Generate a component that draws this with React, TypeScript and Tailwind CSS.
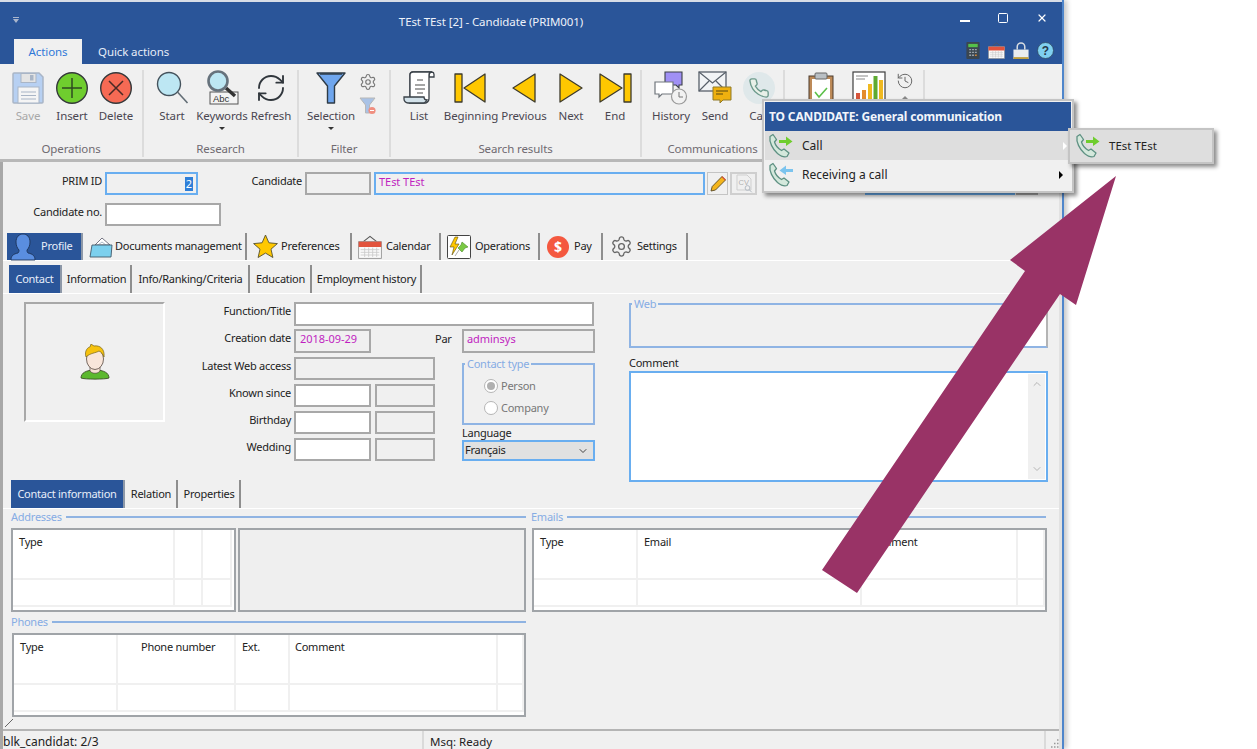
import React from "react";
import { RefreshCw, Settings, History as HistoryIcon, Square, X, ChevronDown, ChevronUp } from "lucide-react";

const PHONE = "M22 16.92v3a2 2 0 0 1-2.18 2 19.79 19.79 0 0 1-8.63-3.07 19.5 19.5 0 0 1-6-6 19.79 19.79 0 0 1-3.07-8.67A2 2 0 0 1 4.11 2h3a2 2 0 0 1 2 1.72 12.84 12.84 0 0 0 .7 2.81 2 2 0 0 1-.45 2.11L8.09 9.91a16 16 0 0 0 6 6l1.27-1.27a2 2 0 0 1 2.11-.45 12.84 12.84 0 0 0 2.81.7A2 2 0 0 1 22 16.92z";
const GREY_FIELD = "border-2 border-[#a8a8a8] bg-[#f0f0f0]";
const WHITE_FIELD = "border-2 border-[#a8a8a8] bg-white";
const BODY_TEXT = "text-[11px] tracking-[-0.25px]";
const VALUE_TEXT = "text-[11px] tracking-[-0.05px] text-[#c01fc0]";
const RIBBON_TEXT = "text-[11.5px] tracking-[-0.1px]";

function SaveIcon() {
  return (
    <svg width="34" height="34" viewBox="0 0 34 34">
      <path d="M3 2h25l4 4v25a1 1 0 0 1-1 1H3a1 1 0 0 1-1-1V3a1 1 0 0 1 1-1z" fill="#b7d0f2" stroke="#a9b5c6" strokeWidth="1.5" />
      <rect x="10" y="2.5" width="15" height="9" fill="#e4e4e4" stroke="#a9b5c6" />
      <rect x="19" y="4" width="3.5" height="5.5" fill="#a9b5c6" />
      <rect x="7" y="16" width="21" height="16" fill="#f5f5f5" stroke="#a9b5c6" />
      <path d="M10 21h15M10 24.5h15M10 28h15" stroke="#a9b5c6" />
    </svg>
  );
}
function InsertIcon() {
  return (
    <svg width="34" height="34" viewBox="0 0 34 34">
      <circle cx="17" cy="17" r="15.3" fill="#6fcd2e" stroke="#34383a" strokeWidth="1.4" />
      <path d="M17 7v20M7 17h20" stroke="#2f4a22" strokeWidth="1.5" />
    </svg>
  );
}
function DeleteIcon() {
  return (
    <svg width="34" height="34" viewBox="0 0 34 34">
      <circle cx="17" cy="17" r="15.3" fill="#f66a54" stroke="#34383a" strokeWidth="1.4" />
      <path d="M10 10l14 14M24 10L10 24" stroke="#4a2a26" strokeWidth="1.5" />
    </svg>
  );
}
function StartIcon() {
  return (
    <svg width="34" height="34" viewBox="0 0 34 34">
      <circle cx="14" cy="13" r="11.5" fill="#bde7f3" stroke="#44525c" strokeWidth="1.4" />
      <path d="M22.5 21l10 11" stroke="#626d75" strokeWidth="1.6" />
    </svg>
  );
}
function KeywordsIcon() {
  return (
    <svg width="34" height="36" viewBox="0 0 34 36">
      <rect x="5" y="22" width="28" height="12" fill="#f3f3f3" stroke="#555" strokeWidth="1" />
      <text x="8" y="32" fontSize="9.5" fontFamily="Liberation Sans, sans-serif" fill="#333">Abc</text>
      <path d="M21 18l9 8" stroke="#333" strokeWidth="3.4" />
      <circle cx="13" cy="11" r="9.5" fill="#bde7f3" stroke="#66727c" strokeWidth="2.6" />
    </svg>
  );
}
function FunnelIcon() {
  return (
    <svg width="32" height="34" viewBox="0 0 32 34">
      <path d="M2 2h28L19.5 15v17h-7V15z" fill="#6fa6ee" stroke="#2f3b46" strokeWidth="1.4" strokeLinejoin="round" />
      <path d="M5 3h22" stroke="#2f3b46" strokeWidth="1.5" />
    </svg>
  );
}
function SmallFunnel() {
  return (
    <svg width="18" height="18" viewBox="0 0 18 18">
      <path d="M1 1h15L10.5 8v8h-4V8z" fill="#a9c2e6" stroke="#b7b7b7" />
      <circle cx="13" cy="13.5" r="3.6" fill="#f08f80" />
      <path d="M11 13.5h4" stroke="#fff" />
    </svg>
  );
}
function ScrollIcon() {
  return (
    <svg width="32" height="34" viewBox="0 0 32 34">
      <path d="M7 26V4a3 3 0 0 1 3-3h19a3 3 0 0 0-3 3v2h5V3.5A2.5 2.5 0 0 0 29 1" fill="#fff" stroke="#3a4148" strokeWidth="1.3" />
      <path d="M7 26V4a3 3 0 0 1 3-3h19a3 3 0 0 0-3 3v22a6 6 0 0 1-3 6H6" fill="#fff" stroke="#3a4148" strokeWidth="1.3" />
      <path d="M1 26h20a3 3 0 0 0 3 3 6 6 0 0 1-3 3H5a4 4 0 0 1-4-4z" fill="#d3e2ea" stroke="#3a4148" strokeWidth="1.3" />
      <path d="M14 9h6M12 14h10M12 18h10M14 22h6" stroke="#888" strokeWidth="1.3" />
    </svg>
  );
}
function NavIcon({ kind }: { kind: "begin" | "prev" | "next" | "end" }) {
  const s = { fill: "#ffc800", stroke: "#3d3a2c", strokeWidth: 1.3, strokeLinejoin: "round" as const };
  return (
    <svg width="34" height="32" viewBox="0 0 34 32">
      {kind === "begin" && (<><rect x="1" y="2" width="7" height="28" {...s} /><path d="M10 16L31 2v28z" {...s} /></>)}
      {kind === "prev" && <path d="M6 16L28 2v28z" {...s} />}
      {kind === "next" && <path d="M28 16L6 2v28z" {...s} />}
      {kind === "end" && (<><path d="M24 16L2 2v28z" {...s} /><rect x="26" y="2" width="7" height="28" {...s} /></>)}
    </svg>
  );
}
function HistoryChat() {
  return (
    <svg width="34" height="34" viewBox="0 0 34 34">
      <path d="M11 1h17v13h-3v3l-3-3H11z" fill="#a090f5" stroke="#3d4148" strokeWidth="1.1" />
      <path d="M1 11h18v12H8l-3 3v-3H1z" fill="#fff" stroke="#70767c" strokeWidth="1.2" />
      <circle cx="25" cy="25.5" r="7.5" fill="#f2f2f2" stroke="#9a9a9a" strokeWidth="1.2" />
      <path d="M25 21v5h4" stroke="#777" fill="none" />
    </svg>
  );
}
function SendMail() {
  return (
    <svg width="34" height="34" viewBox="0 0 34 34">
      <rect x="1" y="1" width="27" height="19" fill="#f2f4f6" stroke="#58606a" strokeWidth="1.3" />
      <path d="M1 1l13.5 11L28 1M1 20l10-10M28 20L18 10" fill="none" stroke="#58606a" strokeWidth="1.2" />
      <path d="M15 16h18v13h-8l-3 3v-3h-7z" fill="#eeb00f" stroke="#8f7a2a" />
      <path d="M18 20h12M18 23h7" stroke="#8b6a10" strokeWidth="1.3" />
    </svg>
  );
}
function PhonePlain({ size = 24 }: { size?: number }) {
  return (
    <svg width={size} height={size} viewBox="0 0 24 24">
      <path d={PHONE} fill="#e8f0e8" stroke="#6d9a8c" strokeWidth="1.5" />
    </svg>
  );
}
function ClipboardIcon() {
  return (
    <svg width="26" height="34" viewBox="0 0 26 34">
      <rect x="1" y="5" width="24" height="29" fill="#bd8a58" stroke="#4a3a2c" />
      <rect x="4" y="8" width="18" height="26" fill="#fff" />
      <rect x="7" y="2" width="12" height="6" rx="1" fill="#b9bfc4" stroke="#666" />
      <path d="M7 21l4 5 8-9" fill="none" stroke="#5cc04a" strokeWidth="1.6" />
    </svg>
  );
}
function ChartIcon() {
  return (
    <svg width="34" height="34" viewBox="0 0 34 34">
      <rect x="1" y="1" width="32" height="32" fill="#fff" stroke="#3e3e3e" strokeWidth="1.2" />
      <path d="M4 5h12M4 8h9" stroke="#888" />
      <rect x="4" y="22" width="4" height="11" fill="#d6553c" />
      <rect x="10" y="19" width="4" height="14" fill="#e38c2e" />
      <rect x="16" y="13" width="4" height="20" fill="#f0b920" />
      <rect x="21.5" y="5" width="4" height="28" fill="#5faa32" />
      <rect x="27" y="9" width="4" height="24" fill="#f0b920" />
    </svg>
  );
}
function Calc() {
  return (
    <svg width="14" height="17" viewBox="0 0 14 18">
      <rect width="14" height="18" rx="1" fill="#3b4650" />
      <rect x="2" y="2" width="10" height="3.5" fill="#55c04a" />
      <path d="M3 8h2M6 8h2M9 8h2M3 11h2M6 11h2M9 11h2M3 14h2M6 14h2" stroke="#9aa4ac" strokeWidth="1.4" />
      <path d="M9 14h2" stroke="#e08a30" strokeWidth="1.4" />
    </svg>
  );
}
function CalendarIcon({ w = 18, h = 18 }: { w?: number; h?: number }) {
  return (
    <svg width={w} height={h} viewBox="0 0 18 18">
      <path d="M4 5l5-4 5 4" fill="none" stroke="#555" strokeWidth=".8" />
      <rect x=".5" y="5" width="17" height="12.5" fill="#fafafa" stroke="#888" strokeWidth=".6" />
      <rect x=".5" y="5" width="17" height="4" fill="#e2533d" />
      <path d="M2 11h14M2 13h14M2 15h14M5 9.5v7M8 9.5v7M11 9.5v7M14 9.5v7" stroke="#c8c8c8" strokeWidth=".6" />
    </svg>
  );
}
function LockIcon() {
  return (
    <svg width="16" height="17" viewBox="0 0 16 18">
      <path d="M4 8V5a4 4 0 0 1 8 0v3" fill="none" stroke="#d8dde2" strokeWidth="1.6" />
      <rect y="8" width="16" height="10" fill="#e9edf0" />
      <rect y="16" width="16" height="2" fill="#c0a040" />
    </svg>
  );
}
function HelpIcon() {
  return (
    <svg width="17" height="17" viewBox="0 0 17 17">
      <circle cx="8.5" cy="8.5" r="8" fill="#7fd0f0" stroke="#2f4a62" strokeWidth=".8" />
      <text x="8.5" y="13" textAnchor="middle" fontSize="12" fontWeight="700" fontFamily="Liberation Sans, sans-serif" fill="#27384a">?</text>
    </svg>
  );
}
function CallArrow({ dir }: { dir: "out" | "in" }) {
  return (
    <svg width="26" height="26" viewBox="0 0 26 26">
      <path d="M2 3.5l3-2 3.5 5-2 2.5c1 3.5 3.5 6.5 7 8.5l2.5-1.5 5 4-2 3.5c-2.5 1-6-.2-9.5-3C4.5 16 1 9 2 3.5z" fill="#d4e8dc" stroke="#5d9082" strokeWidth="1.3" strokeLinejoin="round" />
      {dir === "out"
        ? <path d="M11 7h7V3.5L24.5 8.5 18 13V10h-7z" fill="#6fcd2e" />
        : <path d="M25 7h-7V3.5L11.5 8.5 18 13V10h7z" fill="#7cc4ee" />}
    </svg>
  );
}
function PersonIcon() {
  return (
    <svg width="28" height="28" viewBox="0 0 28 28">
      <path d="M2 27c0-4 2-6 7-7 1-1 1-2 1-3-2-2-3-5-3-8 0-5 3-8 7-8s7 3 7 8c0 3-1 6-3 8 0 1 0 2 1 3 5 1 7 3 7 7z" fill="#5a8ee0" stroke="#1d3358" strokeWidth=".9" />
    </svg>
  );
}
function FolderIcon() {
  return (
    <svg width="24" height="24" viewBox="0 0 24 24">
      <path d="M6 10l7-7 8 7z" fill="#fff" stroke="#556" strokeWidth=".8" />
      <path d="M9 10l4-3 4 3" fill="none" stroke="#9ab" strokeWidth=".8" />
      <path d="M3 10h20l-1 12H1z" fill="#7cd0ee" stroke="#42596a" strokeWidth=".9" />
    </svg>
  );
}
function StarIcon() {
  return (
    <svg width="25" height="25" viewBox="0 0 25 25">
      <path d="M12.5 1l3.4 7.8 8.5.8-6.4 5.6 1.9 8.3-7.4-4.4-7.4 4.4 1.9-8.3L.6 9.6l8.5-.8z" fill="#ffc800" stroke="#55502f" strokeWidth=".9" strokeLinejoin="round" />
    </svg>
  );
}
function OperationsIcon() {
  return (
    <svg width="24" height="24" viewBox="0 0 24 24">
      <rect x=".5" y=".5" width="23" height="23" rx="1" fill="#fff" stroke="#444" />
      <path d="M8 2L3 12h4l-2 8 7-11H8l3-7z" fill="#ffc800" stroke="#5c4d10" strokeWidth=".6" />
      <path d="M15 7l6 5-3 1-3 4-4-4 3-3z" fill="#7ac943" stroke="#4c8a2a" strokeWidth=".6" />
      <path d="M12 15l-4 6" stroke="#aaa" />
    </svg>
  );
}
function PayIcon() {
  return (
    <div className="w-[22px] h-[22px] rounded-full bg-[#f4583f] text-white text-[14px] font-bold flex items-center justify-center">$</div>
  );
}
function AvatarIcon() {
  return (
    <svg width="30" height="36" viewBox="0 0 30 36">
      <path d="M1 34c0-5 5-8 14-8s14 3 14 8c-3 1.5-25 1.5-28 0z" fill="#5cb82e" stroke="#33411f" strokeWidth=".8" />
      <path d="M10 22h10v5c-2 3-8 3-10 0z" fill="#f7e2d4" stroke="#55483f" strokeWidth=".7" />
      <ellipse cx="15" cy="15" rx="8.5" ry="10.5" fill="#f9e6da" stroke="#55483f" strokeWidth=".8" />
      <path d="M6 13C4 7 8 3 10 3l1-3 3 2c6-1 11 3 10 11-1-3-3-5-5-6-3 2-9 2-13 6z" fill="#f6c20e" stroke="#75631a" strokeWidth=".7" />
    </svg>
  );
}
function CvIcon() {
  return (
    <svg width="20" height="20" viewBox="0 0 20 20">
      <path d="M3 1h10l4 4v11H3z" fill="none" stroke="#cfcfcf" />
      <text x="4.5" y="10.5" fontSize="7.5" fontFamily="Liberation Sans, sans-serif" fill="#b0b0b0">CV</text>
      <circle cx="13.5" cy="14" r="2.4" fill="none" stroke="#b4bcc4" />
      <path d="M15.3 15.8l2.5 2.5" stroke="#b4bcc4" />
    </svg>
  );
}

function RibbonButton({ label, width, icon, caret, muted }: { label?: string; width: string; icon: React.ReactNode; caret?: boolean; muted?: boolean }) {
  return (
    <div className={`flex flex-col items-center shrink-0 ${width}`}>
      <div className="h-[36px] flex items-center justify-center">{icon}</div>
      {label && <div className={`mt-[2px] ${RIBBON_TEXT} leading-[16px] whitespace-nowrap ${muted ? "text-[#a8a8a8]" : "text-[#4a4650]"}`}>{label}</div>}
      {caret && <div className="mt-[3px] w-0 h-0 border-x-[3px] border-x-transparent border-t-[3px] border-t-[#333]" />}
    </div>
  );
}
function RibbonGroup({ label, width, pad, children }: { label?: string; width: string; pad: string; children: React.ReactNode }) {
  return (
    <div className={`shrink-0 h-[87px] border-r-2 border-[#dcdcdc] flex flex-col ${width}`}>
      <div className={`flex flex-1 ${pad}`}>{children}</div>
      <div className={`text-center ${RIBBON_TEXT} h-[16px] leading-[16px] text-[#6f6a70]`}>{label}</div>
    </div>
  );
}
function Tab({ label, width, active, icon, textLeft }: { label: string; width: string; active?: boolean; icon?: React.ReactNode; textLeft?: string }) {
  return (
    <div className={`shrink-0 h-full flex items-center ${BODY_TEXT} whitespace-nowrap ${width} ${active ? "bg-[#2a5599] text-[#e8eefa] border-r-2 border-[#8d98a8]" : "bg-[#f0f0f0] text-[#222] border-r-2 border-[#8e8e8e]"}`}>
      {icon && <div className="w-[32px] shrink-0 flex items-center justify-center">{icon}</div>}
      <span className={textLeft ?? ""}>{label}</span>
    </div>
  );
}
function Label({ children, width }: { children: React.ReactNode; width: string }) {
  return <div className={`shrink-0 text-right pb-[6px] ${BODY_TEXT} leading-[16px] text-[#222] whitespace-nowrap ${width}`}>{children}</div>;
}
function Legend({ label }: { label: string }) {
  return (
    <div className="flex items-center h-[16px]">
      <span className={`${BODY_TEXT} text-[#86ace4] leading-[16px] whitespace-nowrap`}>{label}</span>
      <div className="flex-1 h-[2px] ml-[4px] bg-[#8fb3e2]" />
    </div>
  );
}
function DataTable({ columns, width }: { columns: { w: string; label: string; cls?: string }[]; width: string }) {
  return (
    <div className={`h-[84px] shrink-0 bg-white border-2 border-[#a0a4a8] ${width} flex pr-[2px] pb-[3px]`}>
      {columns.map((c, i) => (
        <div key={i} className={`shrink-0 h-full border-r-2 border-[#f0f0f0] flex flex-col ${c.w}`}>
          <div className={`h-[50px] border-b-2 border-[#f0f0f0] pt-[3px] ${BODY_TEXT} leading-[18px] text-[#222] whitespace-nowrap ${c.cls ?? "pl-[6px]"}`}>{c.label}</div>
          <div className="flex-1 border-b-2 border-[#f0f0f0]" />
        </div>
      ))}
    </div>
  );
}
function DateRow({ label }: { label: string }) {
  return (
    <div className="flex items-center h-[23px] mt-[4px]">
      <Label width="w-[121px]">{label}</Label>
      <div className={`ml-[3px] w-[77px] h-full ${WHITE_FIELD}`} />
      <div className={`ml-[4px] w-[60px] h-full ${GREY_FIELD}`} />
    </div>
  );
}
function Radio({ label, checked }: { label: string; checked?: boolean }) {
  return (
    <div className={`flex items-center h-[22px] pl-[20px] ${BODY_TEXT} text-[#777]`}>
      <div className="w-[14px] h-[14px] rounded-full border border-[#b5b5b5] bg-white flex items-center justify-center">
        {checked && <div className="w-[8px] h-[8px] rounded-full bg-[#b0b0b0]" />}
      </div>
      <span className="ml-[3px]">{label}</span>
    </div>
  );
}

export default function App() {
  return (
    <div className="relative w-[1257px] h-[749px] bg-white overflow-hidden font-['Noto_Sans','Open_Sans',sans-serif]">
      <div className="w-[1064px] h-[749px] pt-[2px] bg-[#d8dde6] border-r-2 border-[#4f86cb] shadow-[3px_0_5px_rgba(0,0,0,0.22)] flex flex-col">
        {/* Title bar */}
        <div className="h-[62px] shrink-0 bg-[#2a5599] flex flex-col">
          <div className="h-[35px] flex items-center text-white">
            <div className="ml-[13px] w-[6px] h-[6px] flex flex-col items-center gap-[1px]">
              <div className="w-[6px] h-[1px] bg-[#aab6cc]" />
              <div className="w-0 h-0 border-x-[3px] border-x-transparent border-t-[4px] border-t-[#aab6cc]" />
            </div>
            <div className={`flex-1 text-center ${RIBBON_TEXT} pl-[3px] mt-[4px] text-[#eef2fa]`}>TEst TEst [2] - Candidate (PRIM001)</div>
            <div className="flex items-center gap-[27px] mr-[14px] mb-[3px]">
              <div className="w-[10px] h-[2px] bg-white mt-[5px]" />
              <Square size={12} strokeWidth={2} />
              <X size={12} strokeWidth={2.4} />
            </div>
          </div>
          <div className="flex-1 flex items-end pl-[14px]">
            <div className={`w-[68px] h-[25px] bg-[#f0f0f0] flex items-center justify-center ${RIBBON_TEXT} text-[#2f78d8]`}>Actions</div>
            <div className={`ml-[16px] h-[25px] flex items-center ${RIBBON_TEXT} text-[#e6ecf8]`}>Quick actions</div>
            <div className="ml-auto flex items-center gap-[8px] mr-[8px] mb-[5px]">
              <Calc />
              <CalendarIcon w={17} h={17} />
              <LockIcon />
              <HelpIcon />
            </div>
          </div>
        </div>
        {/* Ribbon */}
        <div className="h-[98px] shrink-0 bg-[#f0f0f0] border-b-[3px] border-[#b8b8b8] flex pt-[6px] pr-[3px]">
          <RibbonGroup label="Operations" width="w-[144px]" pad="pl-[6px]">
            <RibbonButton width="w-[44px]" label="Save" muted icon={<SaveIcon />} />
            <RibbonButton width="w-[44px]" label="Insert" icon={<InsertIcon />} />
            <RibbonButton width="w-[44px]" label="Delete" icon={<DeleteIcon />} />
          </RibbonGroup>
          <RibbonGroup label="Research" width="w-[155px]" pad="pl-[5px]">
            <RibbonButton width="w-[46px]" label="Start" icon={<StartIcon />} />
            <RibbonButton width="w-[54px]" label="Keywords" caret icon={<KeywordsIcon />} />
            <RibbonButton width="w-[44px]" label="Refresh" icon={<RefreshCw size={32} strokeWidth={1.4} color="#30363c" />} />
          </RibbonGroup>
          <RibbonGroup label="Filter" width="w-[92px]" pad="pl-[9px]">
            <RibbonButton width="w-[46px]" label="Selection" caret icon={<FunnelIcon />} />
            <div className="ml-[5px] mt-[3px] flex flex-col items-center gap-[6px]">
              <Settings size={18} strokeWidth={1.5} color="#777" />
              <SmallFunnel />
            </div>
          </RibbonGroup>
          <RibbonGroup label="Search results" width="w-[251px]" pad="pl-[4px]">
            <RibbonButton width="w-[48px]" label="List" icon={<ScrollIcon />} />
            <RibbonButton width="w-[56px]" label="Beginning" icon={<NavIcon kind="begin" />} />
            <RibbonButton width="w-[50px]" label="Previous" icon={<NavIcon kind="prev" />} />
            <RibbonButton width="w-[44px]" label="Next" icon={<NavIcon kind="next" />} />
            <RibbonButton width="w-[44px]" label="End" icon={<NavIcon kind="end" />} />
          </RibbonGroup>
          <RibbonGroup label="Communications" width="w-[143px]" pad="pl-[7px]">
            <RibbonButton width="w-[44px]" label="History" icon={<HistoryChat />} />
            <RibbonButton width="w-[44px]" label="Send" icon={<SendMail />} />
            <RibbonButton width="w-[44px]" label="Call" icon={
              <div className="w-[32px] h-[32px] rounded-full bg-[#dfe8ea] flex items-center justify-center"><PhonePlain size={22} /></div>
            } />
          </RibbonGroup>
          <RibbonGroup width="w-[140px]" pad="pl-[14px]">
            <RibbonButton width="w-[44px]" icon={<ClipboardIcon />} />
            <RibbonButton width="w-[52px]" icon={<ChartIcon />} />
            <div className="ml-[1px] mt-[2px] flex flex-col items-center">
              <HistoryIcon size={18} strokeWidth={1.3} color="#666" />
              <div className="mt-[6px] w-0 h-0 border-x-[3px] border-x-transparent border-b-[3px] border-b-[#888]" />
            </div>
          </RibbonGroup>
        </div>
        {/* Body */}
        <div className="flex-1 min-h-0 bg-[#f0f0f0] border-l-[3px] border-[#a8a8a8] border-r-[3px] border-r-[#e2e2e2] flex flex-col">
          <div className="flex items-center h-[23px] mt-[10px] shrink-0">
            <Label width="w-[99px]">PRIM ID</Label>
            <div className="ml-[3px] w-[93px] h-full border-2 border-[#69aef0] bg-[#f0f0f0] flex items-center justify-end pr-[3px]">
              <span className="bg-[#2f7fd8] text-white text-[11px] leading-[14px] px-[1px]">2</span>
            </div>
            <Label width="w-[104px]">Candidate</Label>
            <div className={`ml-[3px] w-[66px] h-full ${GREY_FIELD}`} />
            <div className={`ml-[3px] w-[331px] h-full border-2 border-[#69aef0] bg-[#f0f0f0] flex items-center pl-[3px] pb-[2px] ${VALUE_TEXT}`}>TEst TEst</div>
            <div className="ml-[2px] w-[21px] h-full border border-[#c4c4c4] flex items-center justify-center">
              <svg width="18" height="18" viewBox="0 0 18 18">
                <path d="M2 16l1.2-4.5L13 1.5l3.5 3.5L6.5 15z" fill="#f4b51c" stroke="#5a4a22" strokeWidth=".9" />
                <path d="M12.5 2l3.5 3.5.8-1L13.5 1.2z" fill="#d9533d" />
              </svg>
            </div>
            <div className="ml-[2px] w-[27px] h-full border-2 border-[#cfcfcf] flex items-center justify-center"><CvIcon /></div>
            <div className="ml-[108px] w-[150px] h-full border-2 border-[#69aef0] bg-[#f0f0f0]" />
            <div className={`ml-[1px] w-[22px] h-full ${GREY_FIELD}`} />
          </div>
          <div className="flex items-center h-[23px] mt-[8px] shrink-0">
            <Label width="w-[99px]">Candidate no.</Label>
            <div className={`ml-[3px] w-[116px] h-full ${WHITE_FIELD}`} />
          </div>
          {/* Main tabs */}
          <div className="h-[28px] mt-[7px] shrink-0 flex gap-[2px] pl-[4px] border-b border-white">
            <Tab active label="Profile" width="w-[76px]" icon={<PersonIcon />} textLeft="ml-[2px]" />
            <Tab label="Documents management" width="w-[162px]" icon={<FolderIcon />} textLeft="ml-[-2px]" />
            <Tab label="Preferences" width="w-[103px]" icon={<StarIcon />} />
            <Tab label="Calendar" width="w-[87px]" icon={<CalendarIcon w={24} h={26} />} />
            <Tab label="Operations" width="w-[97px]" icon={<OperationsIcon />} />
            <Tab label="Pay" width="w-[61px]" icon={<PayIcon />} />
            <Tab label="Settings" width="w-[83px]" icon={<Settings size={23} strokeWidth={1.4} color="#666" />} />
          </div>
          <div className="h-[29px] mt-[4px] shrink-0 flex gap-[1px] pl-[6px] border-b border-white">
            <Tab active label="Contact" width="w-[53px]" textLeft="mx-auto" />
            <Tab label="Information" width="w-[69px]" textLeft="mx-auto" />
            <Tab label="Info/Ranking/Criteria" width="w-[117px]" textLeft="mx-auto" />
            <Tab label="Education" width="w-[61px]" textLeft="mx-auto" />
            <Tab label="Employment history" width="w-[109px]" textLeft="mx-auto" />
          </div>
          {/* Contact form */}
          <div className="h-[178px] shrink-0 flex mt-[8px]">
            <div className="ml-[21px] w-[141px] h-[120px] border-2 border-[#a8a8a8] border-r-white border-b-white flex items-center justify-center shrink-0">
              <AvatarIcon />
            </div>
            <div className="ml-[5px] w-[425px] shrink-0">
              <div className="flex items-center h-[24px]">
                <Label width="w-[121px]">Function/Title</Label>
                <div className={`ml-[3px] w-[300px] h-full ${WHITE_FIELD}`} />
              </div>
              <div className="flex">
                <div className="w-[292px] shrink-0">
                  <div className="flex items-center h-[24px] mt-[3px]">
                    <Label width="w-[121px]">Creation date</Label>
                    <div className={`ml-[3px] w-[77px] h-full ${GREY_FIELD} flex items-center pl-[4px] pb-[3px] ${VALUE_TEXT}`}>2018-09-29</div>
                    <div className={`ml-[64px] pb-[4px] ${BODY_TEXT} text-[#222]`}>Par</div>
                  </div>
                  <div className="flex items-center h-[23px] mt-[4px]">
                    <Label width="w-[121px]">Latest Web access</Label>
                    <div className={`ml-[3px] w-[141px] h-full ${GREY_FIELD}`} />
                  </div>
                  <DateRow label="Known since" />
                  <DateRow label="Birthday" />
                  <DateRow label="Wedding" />
                </div>
                <div className="w-[133px] shrink-0">
                  <div className={`h-[24px] mt-[3px] ${GREY_FIELD} flex items-center pl-[3px] pb-[3px] ${VALUE_TEXT}`}>adminsys</div>
                  <fieldset className="mt-[3px] h-[69px] border-2 border-[#8fb4e4] min-w-0">
                    <legend className={`ml-[1px] px-[2px] ${BODY_TEXT} leading-[16px] text-[#86ace4]`}>Contact type</legend>
                    <div className="mt-[3px]">
                      <Radio label="Person" checked />
                      <Radio label="Company" />
                    </div>
                  </fieldset>
                  <div className={`mt-[1px] ${BODY_TEXT} leading-[14px] text-[#222]`}>Language</div>
                  <div className={`h-[21px] border-2 border-[#69aef0] bg-[#e1e1e1] flex items-center justify-between pl-[1px] pr-[4px] ${BODY_TEXT} text-[#222]`}>
                    Français
                    <ChevronDown size={12} color="#444" />
                  </div>
                </div>
              </div>
            </div>
            <div className="ml-[34px] w-[419px] shrink-0">
              <fieldset className="h-[52px] mt-[-6px] border-2 border-[#8fb4e4] border-r-[#b4b4b4] flex justify-end min-w-0">
                <legend className={`ml-[1px] px-[2px] ${BODY_TEXT} leading-[16px] text-[#86ace4]`}>Web</legend>
                <div className="w-[36px] h-full bg-white ml-auto" />
              </fieldset>
              <div className={`mt-[6px] ${BODY_TEXT} leading-[17px] text-[#222]`}>Comment</div>
              <div className="h-[111px] border-2 border-[#69aef0] bg-white flex justify-end p-[1px]">
                <div className="w-[17px] bg-[#f0f0f0] flex flex-col items-center justify-between py-[4px]">
                  <ChevronUp size={12} color="#b5b5b5" />
                  <ChevronDown size={12} color="#b5b5b5" />
                </div>
              </div>
            </div>
          </div>
          {/* Lower tabs */}
          <div className="h-[29px] shrink-0 flex gap-[1px] pl-[8px] border-b border-white">
            <Tab active label="Contact information" width="w-[114px]" textLeft="mx-auto" />
            <Tab label="Relation" width="w-[52px]" textLeft="mx-auto" />
            <Tab label="Properties" width="w-[62px]" textLeft="mx-auto" />
          </div>
          <div className="flex pl-[8px]">
            <div className="w-[515px] shrink-0">
              <Legend label="Addresses" />
              <div className="flex mt-[3px] gap-[2px]">
                <DataTable width="w-[225px]" columns={[{ w: "w-[162px]", label: "Type" }, { w: "w-[28px]", label: "" }, { w: "w-[29px]", label: "" }]} />
                <div className="w-[288px] h-[84px] border-2 border-[#a0a4a8] bg-[#efefef]" />
              </div>
            </div>
            <div className="ml-[5px] w-[515px] shrink-0">
              <Legend label="Emails" />
              <div className="mt-[3px] ml-[1px]">
                <DataTable width="w-[515px]" columns={[{ w: "w-[104px]", label: "Type" }, { w: "w-[224px]", label: "Email" }, { w: "w-[156px]", label: "Comment" }, { w: "w-[27px]", label: "" }]} />
              </div>
            </div>
          </div>
          <div className="w-[515px] ml-[8px] mt-[2px]">
            <Legend label="Phones" />
          </div>
          <div className="ml-[9px] mt-[3px]">
            <DataTable width="w-[514px]" columns={[{ w: "w-[104px]", label: "Type" }, { w: "w-[118px]", label: "Phone number", cls: "pl-[23px]" }, { w: "w-[54px]", label: "Ext." }, { w: "w-[208px]", label: "Comment", cls: "pl-[5px]" }, { w: "w-[26px]", label: "" }]} />
          </div>
          <div className="flex-1 min-h-0 pl-[2px]">
            <svg width="8" height="8" viewBox="0 0 8 8" className="mt-[2px]"><path d="M0 8L8 0" stroke="#666" strokeWidth="1" /></svg>
          </div>
          {/* Status bar */}
          <div className="h-[20px] shrink-0 border-t-2 border-[#b4b4b4] flex items-center text-[12px] text-[#222]">
            <div className="w-[421px] h-full border-r-2 border-[#dadada] leading-[15px] pt-[3px]">blk_candidat: 2/3</div>
            <div className="pl-[6px] h-full text-[11.5px] leading-[15px] pt-[3px]">Msq: Ready</div>
            <div className="ml-auto h-full w-[15px] border-l-2 border-[#dadada] flex items-end justify-end">
              <svg width="10" height="10" viewBox="0 0 10 10">
                <path d="M8 1h1.5M5 4.5h1.500M8 4.500h1.500M2 8h1.500M5 8h1.500M8 8h1.500" stroke="#999" strokeWidth="1.5" />
              </svg>
            </div>
          </div>
        </div>
      </div>

      {/* Arrow annotation */}
      <svg className="absolute left-0 top-0 pointer-events-none" width="1257" height="749" viewBox="0 0 1257 749">
        <polygon points="1116,176 1010,260 1025,271 822,570 857,593 1060,294 1076,305" fill="#993366" />
      </svg>

      {/* Context menu */}
      <div className="absolute left-[762px] top-[99px] w-[312px] h-[94px] bg-[#f0f0f0] border-2 border-[#c4c4c4] p-[1px] shadow-[3px_3px_4px_rgba(0,0,0,0.45)] text-[12px]">
        <div className="h-[29px] bg-[#2a5599] flex items-center pl-[4px] text-[12px] tracking-[-0.15px] font-bold text-[#f2f5fb] whitespace-nowrap">TO CANDIDATE: General communication</div>
        <div className="h-[29px] bg-[#dedede] flex items-center text-[#222]">
          <div className="ml-[3px]"><CallArrow dir="out" /></div>
          <span className="ml-[8px]">Call</span>
          <div className="ml-auto mr-[4px] w-0 h-0 border-y-[4px] border-y-transparent border-l-[4px] border-l-white" />
        </div>
        <div className="h-[29px] flex items-center text-[#222]">
          <div className="ml-[3px]"><CallArrow dir="in" /></div>
          <span className="ml-[8px]">Receiving a call</span>
          <div className="ml-auto mr-[8px] w-0 h-0 border-y-[4px] border-y-transparent border-l-[4px] border-l-black" />
        </div>
      </div>
      <div className="absolute left-[1068px] top-[128px] w-[146px] h-[36px] bg-[#dedede] border-2 border-[#c4c4c4] shadow-[3px_3px_4px_rgba(0,0,0,0.45)] flex items-center text-[11.5px] text-[#222]">
        <div className="ml-[5px]"><CallArrow dir="out" /></div>
        <span className="ml-[8px]">TEst TEst</span>
      </div>
    </div>
  );
}
